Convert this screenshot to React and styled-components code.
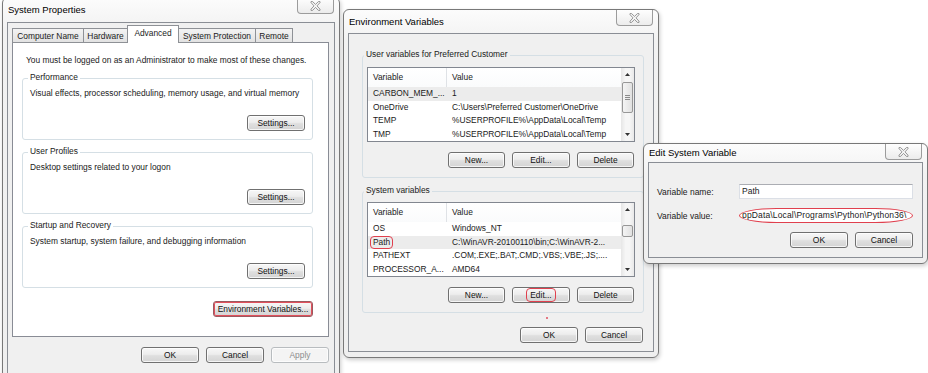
import React from 'react';
import styled, { createGlobalStyle, css } from 'styled-components';

const Global = createGlobalStyle`
  html, body { margin: 0; padding: 0; background: #fff; }
  body {
    font-family: "Liberation Sans", Arial, sans-serif;
    font-size: 8.4px;
    color: #1a1a1a;
  }
`;

const Desktop = styled.div`
  position: relative;
  width: 928px;
  height: 373px;
  overflow: hidden;
  background: #fff;
`;

const Win = styled.section`
  position: absolute;
  left: ${p => p.$x}px;
  top: ${p => p.$y}px;
  width: ${p => p.$w}px;
  height: ${p => p.$h}px;
  box-sizing: border-box;
  display: flex;
  flex-direction: column;
  padding: 0 4px 5px;
  border: 1px solid #787878;
  border-radius: 6px;
  background: linear-gradient(#fcfcfc, #f2f2f2 30px, #efefef);
  box-shadow: 1px 2px 4px rgba(0, 0, 0, 0.2);
  font-size: ${p => p.$fs || 8.4}px;
`;

const TitleBar = styled.header`
  height: ${p => p.$h}px;
  flex: none;
  display: flex;
  justify-content: space-between;
  align-items: flex-start;
`;

const Title = styled.span`
  font-size: 9.5px;
  color: #000;
  padding-left: 1px;
  line-height: ${p => p.$h}px;
`;

const CloseBtn = styled.div`
  box-sizing: border-box;
  width: 37px;
  height: 16px;
  margin-right: 1px;
  border: 1px solid #9c9c9c;
  border-top: none;
  border-radius: 0 0 4px 4px;
  background: linear-gradient(#fefefe, #ececec);
  display: flex;
  align-items: center;
  justify-content: center;
`;

const Client = styled.div`
  flex: 1;
  min-height: 0;
  box-sizing: border-box;
  border: 1px solid #8a8e95;
  background: #f0f0f0;
  display: flex;
  flex-direction: column;
  position: relative;
`;

/* ---------- buttons ---------- */
const Btn = styled.div`
  box-sizing: border-box;
  width: ${p => p.$w || 58}px;
  height: 16px;
  flex: none;
  border: 1px solid ${p => (p.$disabled ? '#b8bcbf' : '#707070')};
  border-radius: 3px;
  background: ${p =>
    p.$disabled
      ? '#f4f4f4'
      : 'linear-gradient(#f7f7f7 0%, #ededed 45%, #dfdfdf 55%, #d4d4d4 100%)'};
  box-shadow: inset 0 0 0 1px rgba(255, 255, 255, 0.75);
  color: ${p => (p.$disabled ? '#8d8d8d' : '#111')};
  display: flex;
  align-items: center;
  justify-content: center;
  line-height: 1;
  ${p =>
    p.$marked &&
    css`
      border-color: #9a5a60;
      box-shadow: inset 0 0 0 1px #e2505c;
    `}
`;

const RedMark = styled.span`
  border: 1px solid #e0404e;
  border-radius: 4px;
  padding: 1px 3px;
  line-height: 10px;
`;

const ButtonRow = styled.div`
  display: flex;
  justify-content: flex-end;
  gap: 7px;
  margin: ${p => p.$m || '0'};
`;

/* ---------- tabs ---------- */
const TabStrip = styled.div`
  display: flex;
  align-items: flex-end;
  height: 17px;
  margin: 3px 0 -1px 4px;
  position: relative;
  z-index: 1;
`;

const Tab = styled.div`
  box-sizing: border-box;
  width: ${p => p.$w}px;
  height: ${p => (p.$active ? 18 : 15)}px;
  margin-right: -1px;
  border: 1px solid #8e9196;
  border-bottom: ${p => (p.$active ? 'none' : '1px solid #8e9196')};
  background: ${p => (p.$active ? '#fff' : 'linear-gradient(#f3f3f3, #e2e2e2)')};
  display: flex;
  align-items: center;
  justify-content: center;
  padding-bottom: ${p => (p.$active ? 3 : 0)}px;
  position: relative;
  z-index: ${p => (p.$active ? 2 : 1)};
  white-space: nowrap;
`;

const TabPanel = styled.div`
  margin: 0 5px 0 4px;
  border: 1px solid #898c95;
  background: #fff;
  padding: 12px 15px 19px 9px;
  display: flex;
  flex-direction: column;
`;

const Notice = styled.div`
  line-height: 11px;
  padding-left: 4px;
  white-space: nowrap;
`;

/* ---------- groups ---------- */
const Group = styled.div`
  position: relative;
  box-sizing: border-box;
  border: 1px solid #d5dfe5;
  border-radius: 3px;
  margin: ${p => p.$m};
  padding: ${p => p.$p};
  display: flex;
  flex-direction: column;
`;

const Legend = styled.span`
  position: absolute;
  top: -7px;
  left: ${p => p.$x}px;
  padding: 0 2px;
  line-height: 11px;
  background: ${p => p.$bg};
  white-space: nowrap;
`;

const Desc = styled.div`
  line-height: 11px;
  white-space: nowrap;
`;

/* ---------- list view ---------- */
const List = styled.div`
  box-sizing: border-box;
  height: 75px;
  border: 1px solid #828790;
  background: #fff;
  display: flex;
  overflow: hidden;
`;

const ListBody = styled.div`
  flex: 1;
  min-width: 0;
  display: flex;
  flex-direction: column;
`;

const HeadRow = styled.div`
  display: grid;
  grid-template-columns: 79px 1fr;
  height: 19px;
  flex: none;
  background: linear-gradient(#ffffff, #fafbfc);
`;

const HeadCell = styled.div`
  padding-left: 5px;
  line-height: 19px;
  border-right: ${p => (p.$first ? '1px solid #dfe2e6' : 'none')};
`;

const Row = styled.div`
  display: grid;
  grid-template-columns: 79px 1fr;
  height: 13.5px;
  flex: none;
  background: ${p => (p.$sel ? '#ececec' : 'transparent')};
`;

const Cell = styled.div`
  padding-left: 5px;
  line-height: 13.5px;
  white-space: nowrap;
  overflow: hidden;
  display: flex;
  align-items: center;
`;

const PathMark = styled.span`
  border: 1px solid #e0404e;
  border-radius: 4px;
  margin-left: -3px;
  padding: 0 2px;
  line-height: 11px;
`;

const ScrollBar = styled.div`
  width: 13px;
  flex: none;
  display: flex;
  flex-direction: column;
  background: linear-gradient(90deg, #e6e6e6, #f6f6f6 35%, #f6f6f6 65%, #e9e9e9);
`;

const Arrow = styled.div`
  height: 13px;
  flex: none;
  display: flex;
  align-items: center;
  justify-content: center;
`;

const Track = styled.div`
  flex: 1;
  display: flex;
  flex-direction: column;
`;

const Thumb = styled.div`
  box-sizing: border-box;
  margin: ${p => p.$top}px 1px 0;
  height: ${p => p.$h}px;
  border: 1px solid #979797;
  border-radius: 2px;
  background: linear-gradient(90deg, #f4f4f4, #e1e1e1);
  display: flex;
  align-items: center;
  justify-content: center;
`;

const Grip = styled.div`
  width: 5px;
  height: 5px;
  background: repeating-linear-gradient(#8a8a8a 0 1px, transparent 1px 2px);
`;

/* ---------- edit form ---------- */
const Form = styled.div`
  display: grid;
  grid-template-columns: 82px 174px;
  row-gap: 9px;
  align-items: center;
  padding: 21px 8px 0 8px;
`;

const Label = styled.div`
  white-space: nowrap;
`;

const Input = styled.div`
  box-sizing: border-box;
  height: 15px;
  border: 1px solid #dbdfe6;
  border-top-color: #abadb3;
  background: #fff;
  padding-left: 2px;
  line-height: 13px;
  white-space: nowrap;
  overflow: hidden;
  ${p =>
    p.$marked &&
    css`
      border: 1px solid #e0404e;
      border-radius: 40px / 8px;
      letter-spacing: 0.15px;
    `}
`;

const Dot = styled.span`
  position: absolute;
  left: 197px;
  top: 283px;
  width: 2px;
  height: 2px;
  border-radius: 1px;
  background: #e05060;
`;

/* ---------- small drawings ---------- */
function CloseX() {
  return (
    <svg width="11" height="10" viewBox="0 0 11 10">
      <polygon
        points="1,0.6 2.6,0.6 5.5,3.4 8.4,0.6 10,0.6 10,1.6 7,4.9 10,8.2 10,9.4 8.4,9.4 5.5,6.4 2.6,9.4 1,9.4 1,8.2 4,4.9 1,1.6"
        fill="#f6f6f6"
        stroke="#7d7d7d"
        strokeWidth="0.8"
        strokeLinejoin="round"
      />
    </svg>
  );
}

function Window({ x, y, w, h, fs, titleH, title, children }) {
  return (
    <Win $x={x} $y={y} $w={w} $h={h} $fs={fs}>
      <TitleBar $h={titleH}>
        <Title $h={titleH}>{title}</Title>
        <CloseBtn>
          <CloseX />
        </CloseBtn>
      </TitleBar>
      <Client>{children}</Client>
    </Win>
  );
}

function UpArrow() {
  return (
    <svg width="5" height="3" viewBox="0 0 5 3">
      <polygon points="0,3 2.5,0 5,3" fill="#333" />
    </svg>
  );
}
function DownArrow() {
  return (
    <svg width="5" height="3" viewBox="0 0 5 3">
      <polygon points="0,0 5,0 2.5,3" fill="#333" />
    </svg>
  );
}

function VarList({ rows, thumbTop, thumbH, grip }) {
  return (
    <List>
      <ListBody>
        <HeadRow>
          <HeadCell $first>Variable</HeadCell>
          <HeadCell>Value</HeadCell>
        </HeadRow>
        {rows.map(r => (
          <Row key={r.name} $sel={r.sel}>
            <Cell>{r.mark ? <PathMark>{r.name}</PathMark> : r.name}</Cell>
            <Cell>{r.value}</Cell>
          </Row>
        ))}
      </ListBody>
      <ScrollBar>
        <Arrow>
          <UpArrow />
        </Arrow>
        <Track>
          <Thumb $top={thumbTop} $h={thumbH}>
            {grip && <Grip />}
          </Thumb>
        </Track>
        <Arrow>
          <DownArrow />
        </Arrow>
      </ScrollBar>
    </List>
  );
}

const userVars = [
  { name: 'CARBON_MEM_...', value: '1', sel: true },
  { name: 'OneDrive', value: 'C:\\Users\\Preferred Customer\\OneDrive' },
  { name: 'TEMP', value: '%USERPROFILE%\\AppData\\Local\\Temp' },
  { name: 'TMP', value: '%USERPROFILE%\\AppData\\Local\\Temp' },
];

const sysVars = [
  { name: 'OS', value: 'Windows_NT' },
  { name: 'Path', value: 'C:\\WinAVR-20100110\\bin;C:\\WinAVR-2...', sel: true, mark: true },
  { name: 'PATHEXT', value: '.COM;.EXE;.BAT;.CMD;.VBS;.VBE;.JS;....' },
  { name: 'PROCESSOR_A...', value: 'AMD64' },
];

const sections = [
  { label: 'Performance', desc: 'Visual effects, processor scheduling, memory usage, and virtual memory' },
  { label: 'User Profiles', desc: 'Desktop settings related to your logon' },
  { label: 'Startup and Recovery', desc: 'System startup, system failure, and debugging information' },
];

const tabs = [
  { label: 'Computer Name', w: 72 },
  { label: 'Hardware', w: 45 },
  { label: 'Advanced', w: 52, active: true },
  { label: 'System Protection', w: 78 },
  { label: 'Remote', w: 38 },
];

export default function App() {
  return (
    <>
      <Global />
      <Desktop>
        <Window x={2} y={-3} w={338} h={385} titleH={24} title="System Properties">
          <TabStrip>
            {tabs.map(t => (
              <Tab key={t.label} $w={t.w} $active={t.active}>
                {t.label}
              </Tab>
            ))}
          </TabStrip>
          <TabPanel>
            <Notice>You must be logged on as an Administrator to make most of these changes.</Notice>
            {sections.map(s => (
              <Group key={s.label} $m="12px 0 0 0" $p="9px 7px 8px 7px">
                <Legend $x={5} $bg="#fff">
                  {s.label}
                </Legend>
                <Desc>{s.desc}</Desc>
                <ButtonRow $m="16px 0 0 0">
                  <Btn $w={58}>Settings...</Btn>
                </ButtonRow>
              </Group>
            ))}
            <ButtonRow $m="13px 0 0 0">
              <Btn $w={100} $marked>
                Environment Variables...
              </Btn>
            </ButtonRow>
          </TabPanel>
          <ButtonRow $m="10px 5px 0 0">
            <Btn>OK</Btn>
            <Btn>Cancel</Btn>
            <Btn $disabled>Apply</Btn>
          </ButtonRow>
        </Window>

        <Window x={343} y={9} w={316} h={349} titleH={23} title="Environment Variables">
          <Group $m="21px 9px 0 13px" $p="11px 8px 9px 4px">
            <Legend $x={1} $bg="#f0f0f0">
              User variables for Preferred Customer
            </Legend>
            <VarList rows={userVars} thumbTop={1} thumbH={31} grip />
            <ButtonRow $m="10px 1px 0 0">
              <Btn $w={57}>New...</Btn>
              <Btn $w={58}>Edit...</Btn>
              <Btn $w={57}>Delete</Btn>
            </ButtonRow>
          </Group>
          <Group $m="13px 9px 0 13px" $p="10px 8px 9px 4px">
            <Legend $x={1} $bg="#f0f0f0">
              System variables
            </Legend>
            <VarList rows={sysVars} thumbTop={9} thumbH={12} />
            <ButtonRow $m="10px 1px 0 0">
              <Btn $w={57}>New...</Btn>
              <Btn $w={58}>
                <RedMark>Edit...</RedMark>
              </Btn>
              <Btn $w={57}>Delete</Btn>
            </ButtonRow>
          </Group>
          <ButtonRow $m="14px 10px 0 0">
            <Btn>OK</Btn>
            <Btn>Cancel</Btn>
          </ButtonRow>
          <Dot />
        </Window>

        <Window x={643} y={143} w={285} h={121} fs={8.5} titleH={18} title="Edit System Variable">
          <Form>
            <Label>Variable name:</Label>
            <Input>Path</Input>
            <Label>Variable value:</Label>
            <Input $marked>ppData\Local\Programs\Python\Python36\</Input>
          </Form>
          <ButtonRow $m="9px 9px 0 0">
            <Btn>OK</Btn>
            <Btn>Cancel</Btn>
          </ButtonRow>
        </Window>
      </Desktop>
    </>
  );
}
